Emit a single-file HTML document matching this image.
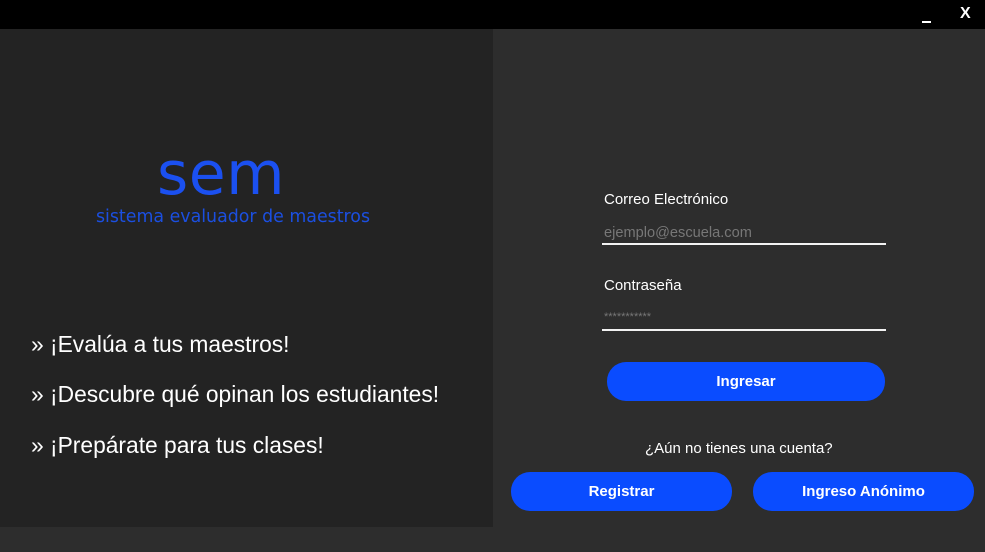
<!DOCTYPE html>
<html><head><meta charset="utf-8"><style>
body{margin:0;width:985px;height:552px;background:#2d2d2d;position:relative;overflow:hidden;font-family:"Liberation Sans",sans-serif;}
.a{position:absolute;}
.top{left:0;top:0;width:985px;height:29px;background:#000;}
.left{left:0;top:29px;width:493px;height:498px;background:#232323;}
.sem{left:0;width:442px;text-align:center;top:139px;font-family:"DejaVu Sans",sans-serif;font-size:60px;color:#1b50f0;font-weight:normal;letter-spacing:0.5px}
.sub{left:0;width:466px;text-align:center;top:207px;font-family:"DejaVu Sans",sans-serif;font-size:17.4px;color:#1b4fe0;}
.b{left:31px;color:#fff;font-size:22.8px;}
.lbl{left:604px;color:#fff;font-size:15px;}
.ph{left:604px;color:#777;font-size:14.6px;}
.line{left:602px;width:284px;height:2px;background:#f2f2f2;}
.btn{background:#0a4cff;color:#fff;font-weight:bold;font-size:15px;border-radius:19px;height:39px;line-height:39px;text-align:center;}
</style></head><body>
<div class="a top"></div>
<div class="a" style="left:922px;top:21px;width:9px;height:2px;background:#fff"></div>
<div class="a" style="left:960px;top:5px;color:#fff;font-size:16px;font-weight:bold">X</div>
<div class="a left"></div>
<div class="a sem">sem</div>
<div class="a sub">sistema evaluador de maestros</div>
<div class="a b" style="top:331px">» ¡Evalúa a tus maestros!</div>
<div class="a b" style="top:381px">» ¡Descubre qué opinan los estudiantes!</div>
<div class="a b" style="top:432px">» ¡Prepárate para tus clases!</div>
<div class="a lbl" style="top:191px">Correo Electrónico</div>
<div class="a ph" style="top:225px">ejemplo@escuela.com</div>
<div class="a line" style="top:243px"></div>
<div class="a lbl" style="top:277px">Contraseña</div>
<div class="a ph" style="top:311px;font-size:11px;letter-spacing:0px">***********</div>
<div class="a line" style="top:329px"></div>
<div class="a btn" style="left:607px;top:362px;width:278px">Ingresar</div>
<div class="a" style="left:645px;top:440px;color:#fff;font-size:15px">¿Aún no tienes una cuenta?</div>
<div class="a btn" style="left:511px;top:472px;width:221px">Registrar</div>
<div class="a btn" style="left:753px;top:472px;width:221px">Ingreso Anónimo</div>
</body></html>
